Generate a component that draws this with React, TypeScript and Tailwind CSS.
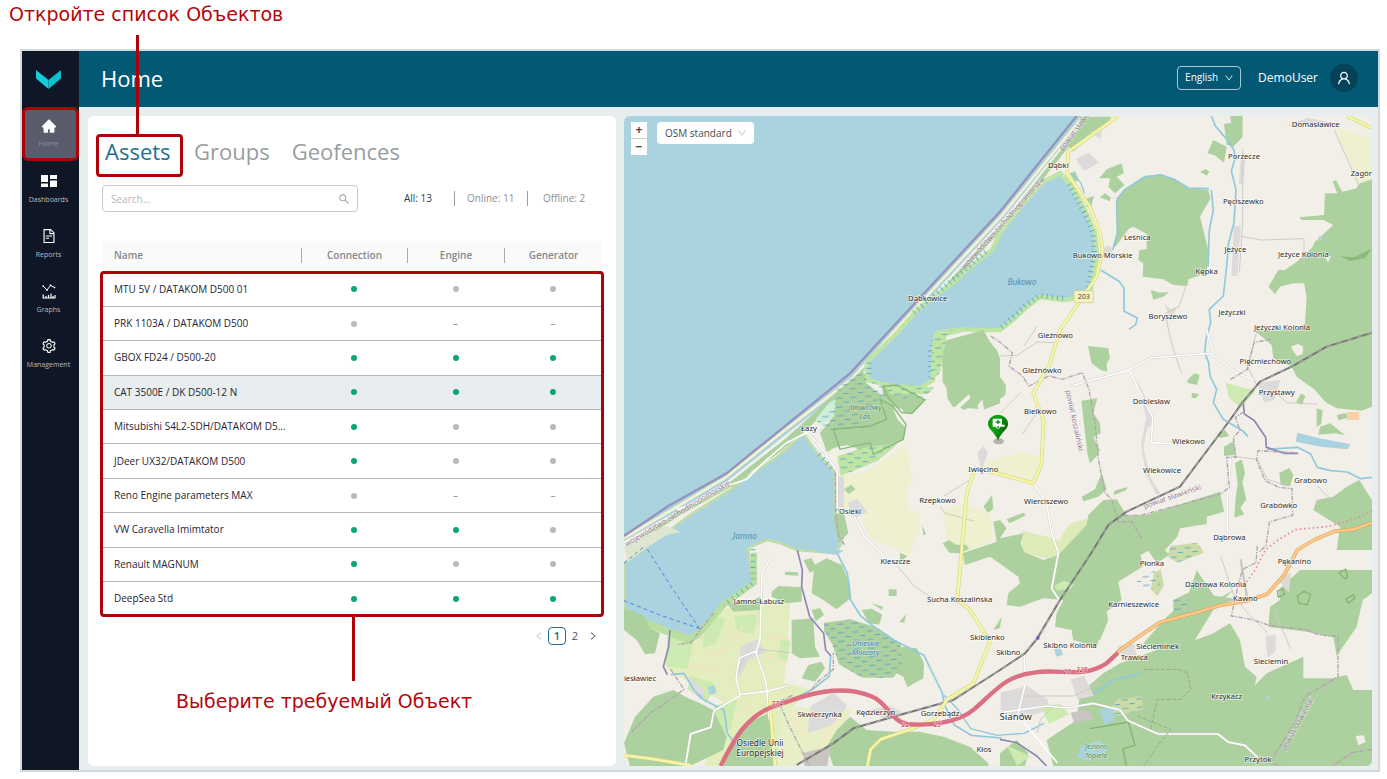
import React, { useState } from 'react';
import {
  AiFillHome,
  AiOutlineDown,
  AiOutlineFileText,
  AiOutlineLeft,
  AiOutlineRight,
  AiOutlineSearch,
  AiOutlineSetting,
  AiOutlineUser
} from 'react-icons/ai';

type Status = 'on' | 'off' | 'none';

interface Asset {
  name: string;
  connection: Status;
  engine: Status;
  generator: Status;
}

interface MapLabel {
  text: string;
  x: number;
  y: number;
  size?: number;
}

const assets: Asset[] = [
  { name: 'MTU 5V / DATAKOM D500 01', connection: 'on', engine: 'off', generator: 'off' },
  { name: 'PRK 1103A / DATAKOM D500', connection: 'off', engine: 'none', generator: 'none' },
  { name: 'GBOX FD24 / D500-20', connection: 'on', engine: 'on', generator: 'on' },
  { name: 'CAT 3500E / DK D500-12 N', connection: 'on', engine: 'on', generator: 'on' },
  { name: 'Mitsubishi S4L2-SDH/DATAKOM D5...', connection: 'on', engine: 'off', generator: 'off' },
  { name: 'JDeer UX32/DATAKOM D500', connection: 'on', engine: 'off', generator: 'off' },
  { name: 'Reno Engine parameters MAX', connection: 'off', engine: 'none', generator: 'none' },
  { name: 'VW Caravella Imimtator', connection: 'on', engine: 'on', generator: 'off' },
  { name: 'Renault MAGNUM', connection: 'on', engine: 'off', generator: 'off' },
  { name: 'DeepSea Std', connection: 'on', engine: 'on', generator: 'on' }
];

// Label positions are in map units, centred on the text
const places: MapLabel[] = [
  { text: 'Domasławice', x: 2075, y: 34 },
  { text: 'Porzecze', x: 1860, y: 130 },
  { text: 'Zagór', x: 2212, y: 180 },
  { text: 'Pęciszewko', x: 1858, y: 264 },
  { text: 'Dąbki', x: 1303, y: 155 },
  { text: 'Leśnica', x: 1540, y: 373 },
  { text: 'Jeżyce', x: 1834, y: 408 },
  { text: 'Jeżyce Kolonia', x: 2038, y: 422 },
  { text: 'Bukowo Morskie', x: 1436, y: 426 },
  { text: 'Kępka', x: 1748, y: 475 },
  { text: 'Dąbkowice', x: 911, y: 555 },
  { text: 'Boryszewo', x: 1632, y: 610 },
  { text: 'Jeżyczki', x: 1824, y: 597 },
  { text: 'Jeżyczki Kolonia', x: 1974, y: 641 },
  { text: 'Gleźnowo', x: 1294, y: 665 },
  { text: 'Gleźnówko', x: 1254, y: 771 },
  { text: 'Pięćmiechowo', x: 1924, y: 743 },
  { text: 'Przystawy', x: 1958, y: 838 },
  { text: 'Dobiesław', x: 1582, y: 864 },
  { text: 'Bielkowo', x: 1249, y: 893 },
  { text: 'Łazy', x: 555, y: 945 },
  { text: 'Wiekowo', x: 1694, y: 983 },
  { text: 'Iwięcino', x: 1078, y: 1068 },
  { text: 'Wiekowice', x: 1614, y: 1071 },
  { text: 'Grabowo', x: 2060, y: 1102 },
  { text: 'Rzepkowo', x: 941, y: 1161 },
  { text: 'Wierciszewo', x: 1266, y: 1163 },
  { text: 'Grabówko', x: 1964, y: 1176 },
  { text: 'Osieki', x: 678, y: 1194 },
  { text: 'Dąbrowa', x: 1816, y: 1273 },
  { text: 'Kleszcze', x: 814, y: 1345 },
  { text: 'Płonka', x: 1584, y: 1351 },
  { text: 'Pękanino', x: 2011, y: 1345 },
  { text: 'Dąbrowa Kolonia', x: 1775, y: 1412 },
  { text: 'Kawno', x: 1864, y: 1455 },
  { text: 'Sucha Koszalińska', x: 1007, y: 1458 },
  { text: 'Jamno-Łabusz', x: 405, y: 1464 },
  { text: 'Karnieszewice', x: 1529, y: 1474 },
  { text: 'Skibienko', x: 1090, y: 1573 },
  { text: 'Skibno', x: 1153, y: 1618 },
  { text: 'Skibno Kolonia', x: 1338, y: 1597 },
  { text: 'Siecieminek', x: 1601, y: 1600 },
  { text: 'Trawica', x: 1531, y: 1632 },
  { text: 'Sieciemin', x: 1941, y: 1644 },
  { text: 'iesławiec', x: 48, y: 1694 },
  { text: 'Krzykacz', x: 1808, y: 1748 },
  { text: 'Skwierzynka', x: 587, y: 1804 },
  { text: 'Kędzierzyn', x: 755, y: 1796 },
  { text: 'Gorzebądz', x: 948, y: 1799 },
  { text: 'Sianów', x: 1175, y: 1811, size: 29 },
  { text: 'Osiedle Unii', x: 408, y: 1889, size: 25 },
  { text: 'Europejskiej', x: 408, y: 1920, size: 25 },
  { text: 'Kłos', x: 1080, y: 1908 },
  { text: 'Przytok', x: 1902, y: 1939 }
];

const waters: MapLabel[] = [
  { text: 'Bukowo', x: 1194, y: 508 },
  { text: 'Jamno', x: 363, y: 1270 }
];

const captionClass = 'whitespace-nowrap font-["DejaVu_Sans",sans-serif] text-[19px] leading-6 text-[#b5060b]';

const DashboardIcon = () => (
  <svg viewBox="0 0 16 12" className="h-3 w-4" fill="currentColor" aria-hidden="true">
    <path d="M0 0h7v7H0zM9 0h7v4H9zM0 8.500h7V12H0zM9 5.500h7V12H9z" />
  </svg>
);

const GraphsIcon = () => (
  <svg viewBox="0 0 14 15" className="h-[15px] w-3.5" fill="none" stroke="currentColor" aria-hidden="true">
    <path d="M1 2l4 4 3.500-4.500L12.500 3.500" strokeWidth="1" />
    <path d="M.3 1.400h1.600v1.400H.3zM4.300 5.200h1.600v1.500H4.300zM7.700.6h1.600V2H7.700zM11.800 2.800h1.500v1.500h-1.500z" fill="currentColor" stroke="none" />
    <path d="M1.200 10.500V14M4 12v2M6.500 11v3M9 9.500V14M11 12v2M13 11v3M.5 14h13" strokeWidth="1.200" />
  </svg>
);

const Sidebar = () => {
  const items = [
    { label: 'Dashboards', icon: <DashboardIcon /> },
    { label: 'Reports', icon: <AiOutlineFileText className="size-4" /> },
    { label: 'Graphs', icon: <GraphsIcon /> },
    { label: 'Management', icon: <AiOutlineSetting className="size-4" /> }
  ];

  return (
    <aside className="flex w-[57px] shrink-0 flex-col bg-[#0f1625]">
      <a href="#" aria-label="Main page" className="flex h-14 items-center justify-center pr-1">
        <svg viewBox="0 0 25 19" className="h-[19px] w-[25px]" aria-hidden="true">
          <path d="M0 0l12.500 10V19L0 8.500z" fill="#16cbdc" />
          <path d="M25 0L12.500 10V19L25 8.500z" fill="#0cc0d2" />
        </svg>
      </a>
      <nav className="flex flex-col text-[7px] leading-3 text-[#b9bdc6]">
        <a href="#" className="flex h-[54px] flex-col items-center gap-1 rounded-md border-3 border-[#ad0308] bg-[#5b5c6b] pt-2 pr-1 text-[#8e909e]">
          <span className="flex h-4 items-center text-white"><AiFillHome className="size-4" /></span>
          Home
        </a>
        {items.map(item => (
          <a key={item.label} href="#" className="flex h-[55px] flex-col items-center gap-[5px] pt-3 pr-1">
            <span className="flex h-4 items-center text-white">{item.icon}</span>
            {item.label}
          </a>
        ))}
      </nav>
    </aside>
  );
};

const Header = () => (
  <header className="flex h-14 shrink-0 items-center justify-between bg-[#035874] pr-5 pb-0.5 pl-[22px] text-white">
    <h1 className="text-[22px] leading-8">Home</h1>
    <div className="flex items-center text-xs">
      <label className="relative mr-[17px] flex items-center">
        <span className="sr-only">Language</span>
        <select className="h-6 w-16 appearance-none rounded border border-[#a9c8d2] bg-transparent pl-[7px] text-[10px] font-medium text-white">
          <option>English</option>
        </select>
        <AiOutlineDown className="pointer-events-none absolute right-[7px] size-2.5" />
      </label>
      <span className="mr-3 font-medium">DemoUser</span>
      <button type="button" aria-label="Account" className="flex size-7 items-center justify-center rounded-full bg-[#05425a]">
        <AiOutlineUser className="size-4" />
      </button>
    </div>
  </header>
);

const StatusMark = ({ status }: { status: Status }) => {
  if (status === 'none') return <span className="text-[#8d9296]">–</span>;
  return (
    <span
      className={`mx-auto block size-1.5 rounded-full ${status === 'on' ? 'bg-[#0ba772]' : 'bg-[#b7b9ba]'}`}
    />
  );
};

const AssetsPanel = () => {
  const [query, setQuery] = useState('');
  const visible = assets.filter(a => a.name.toLowerCase().includes(query.toLowerCase()));

  return (
    <section className="flex flex-col rounded-md bg-white px-3.5 pt-[18px] pb-6">
      {/* Tabs */}
      <div className="-ml-1.5 flex items-start text-[22px] leading-7 text-[#979da1]">
        <div className="relative mr-[11px] h-[43px] w-[87px] rounded border-3 border-[#ad0308]">
          <button type="button" className="pl-1.5 text-[#24708c]">Assets</button>
          <span className="absolute bottom-full left-[37px] h-[102px] w-[3px] bg-[#ad0308]" />
        </div>
        <button type="button" className="mr-[22px] pt-[3px]">Groups</button>
        <button type="button" className="pt-[3px]">Geofences</button>
      </div>

      {/* Search and counters */}
      <div className="mt-2 flex items-center text-[10px] text-[#8b9094]">
        <label className="relative mr-[46px] flex flex-1 items-center">
          <span className="sr-only">Search</span>
          <input
            type="text"
            value={query}
            onChange={e => setQuery(e.target.value)}
            placeholder="Search..."
            className="h-[27px] w-full rounded border border-[#c6cacd] px-2 placeholder:text-[#b5b8ba]"
          />
          <AiOutlineSearch className="absolute right-2 size-3 text-[#8d9296]" />
        </label>
        <button type="button" className="w-[50px] text-left font-medium text-[#333b47]">All: 13</button>
        <button type="button" className="w-[73px] border-l border-[#9a9fa3] pl-3 text-left">Online: 11</button>
        <button type="button" className="w-[75px] border-l border-[#9a9fa3] pl-[15px] text-left">Offline: 2</button>
      </div>

      {/* Asset list */}
      <div className="relative mt-[29px]">
        <table className="h-[374px] w-full table-fixed border-collapse text-[10px]">
          <colgroup>
            <col />
            <col className="w-[106px]" />
            <col className="w-[97px]" />
            <col className="w-[98px]" />
          </colgroup>
          <thead className="bg-[#fafafa] text-[#85898d]">
            <tr className="h-8">
              <th className="pb-[3px] pl-3 text-left font-semibold">Name</th>
              {['Connection', 'Engine', 'Generator'].map(title => (
                <th key={title} className="p-0 pb-[3px] font-semibold">
                  <span className="block border-l border-[#a9adb0]">{title}</span>
                </th>
              ))}
            </tr>
          </thead>
          <tbody className="text-[#1f2433]">
            {visible.map((asset, idx) => (
              <tr
                key={asset.name}
                className={`border-b border-[#b5b8ba] last:border-b-0 ${idx === 3 ? 'bg-[#e8eef0]' : ''}`}
              >
                <td className="truncate pl-3 font-medium">{asset.name}</td>
                <td className="text-center"><StatusMark status={asset.connection} /></td>
                <td className="text-center"><StatusMark status={asset.engine} /></td>
                <td className="text-center"><StatusMark status={asset.generator} /></td>
              </tr>
            ))}
          </tbody>
        </table>
        <div className="pointer-events-none absolute -inset-x-0.5 top-[30px] -bottom-0.5 rounded border-3 border-[#ad0308]">
          <span className="absolute top-full left-1/2 h-[67px] w-[3px] bg-[#ad0308]" />
        </div>
      </div>

      {/* Pagination */}
      <nav aria-label="Pages" className="mt-3 mr-1 flex items-center justify-end text-[11px] text-[#4a5058]">
        <button type="button" aria-label="Previous page" className="mr-1"><AiOutlineLeft className="size-2.5 text-[#bfc2c4]" /></button>
        <button type="button" className="size-[18px] rounded border border-[#24708c] font-semibold leading-4 text-[#24708c]">1</button>
        <button type="button" className="size-[18px]">2</button>
        <button type="button" aria-label="Next page" className="ml-1"><AiOutlineRight className="size-2.5" /></button>
      </nav>

      <p className={`mt-11 pl-[74px] ${captionClass}`}>Выберите требуемый Объект</p>
    </section>
  );
};

const AssetMap = () => (
  <section className="relative min-h-[600px] overflow-hidden rounded-md bg-[#aad3df]">
    <svg
      viewBox="0 0 2244 1950"
      preserveAspectRatio="xMidYMid slice"
      className="absolute inset-0 size-full font-['Noto_Sans',sans-serif]"
      role="img"
      aria-label="Asset map"
    >
      <defs>
        <pattern id="marsh" width="44" height="26" patternUnits="userSpaceOnUse" patternTransform="rotate(-4)">
          <path d="M3 6h19M26 19h16" stroke="#4f9fc4" strokeWidth="2.500" />
        </pattern>
        <linearGradient id="pin" x1="0" x2="1" y1="0" y2=".4">
          <stop offset="0" stopColor="#0b8a0b" />
          <stop offset=".45" stopColor="#10a810" />
          <stop offset="1" stopColor="#056405" />
        </linearGradient>
      </defs>

      {/* Land and coast */}
      <path d="M1385 0L1140 305 812 660 692 795 480 960 310 1095 150 1190 0 1275V1950H2244V0z" fill="#f2efe9" />
      <path d="M1378 0L1134 298 805 652 685 787 473 950 303 1086 143 1182 0 1266" fill="none" stroke="#f8f1cd" strokeWidth="8" />
      <path d="M1392 10L1150 315 820 672 700 805 490 972 320 1106 170 1190 60 1262" fill="none" stroke="#add19e" strokeWidth="12" />
      <path d="M480 972L310 1105 330 1118 387 1062 459 1015 507 974 560 930 640 850 620 845z" fill="#add19e" />
      <path d="M1358 0L1128 287 798 642 678 772 388 1007 308 1072 133 1170 0 1260" fill="none" stroke="#9794bb" strokeWidth="7" />

      {/* Farmland and meadows */}
      <g fill="#eef0d0">
        <path d="M640 1080L720 1070 850 985 860 1060 845 1150 880 1220 860 1320 800 1290 740 1270 700 1180 640 1180z" />
        <g transform="translate(828 852)">
          <path d="M250 185L370 155 430 170 428 200 400 250 240 215zM195 310L270 340 280 420 190 460 140 420 130 330zM0 330L60 335 60 400 0 460zM0 150L40 240 0 290z" />
        </g>
        <path d="M2130 30L2244 70V190L2205 220 2170 130z" />
      </g>
      <path d="M290 1480L500 1440 490 1590 480 1700 560 1720 500 1780 470 1950H240L300 1760 180 1690 130 1660 145 1560 220 1560z" fill="#e4edbd" />
      <path d="M470 1770L680 1780 640 1880 520 1950H460z" fill="#e8efc6" />
      <g fill="#cdebb0">
        <path d="M130 1560L210 1575 190 1660 125 1650z" />
        <path d="M245 1500l60 5-30 80-40 10zM330 1500l70-5-10 60-50-10zM200 1680l70 20-20 60-60-40zM270 1770l70-20-20 90-50 20zM470 1570l30 5-10 60-30-5z" />
        <path d="M1805 800l90 25-45 50-35-30z" />
      </g>
      <path d="M1195 1245l90 20 20 10 30-50 60-20-10 50-70 70-60 0-60-20z" fill="#dcebb8" />
      <g stroke="#f7e3c3" strokeWidth="7" opacity=".7">
        <path d="M310 1590l50-60M240 1620l70-20M330 1560l60 30M440 1560l60 10M430 1620l60 20M200 1650l90 10M370 1760l20 40M560 1850l40-60M600 1870l40-60M510 1800l30 60" />
      </g>

      {/* Lakes */}
      <path
        d="M1308 171L1344 213 1383 282 1413 351 1419 411 1404 492 1398 543 1317 552 1248 543 1209 573 1167 612 1128 642 1077 642 1008 640 940 650 927 693 927 792 879 822 789 807 729 792 729 738 819 651 879 582 948 528 987 501 1029 462 1104 402 1128 351 1188 273 1257 198z"
        fill="#aad3df" stroke="#bfe5a5" strokeWidth="13"
      />
      <path
        d="M1335 205L1377 282 1407 351 1411 411 1396 492 1390 540M1317 547L1248 538 1205 568 1128 638M935 660L920 700V785M735 740L735 780M870 590L950 522 1095 400"
        fill="none" stroke="#58a3c6" strokeWidth="15" strokeDasharray="2.500 13"
      />
      <path
        d="M537 951L579 1011 633 1068 633 1182 654 1281 633 1311 519 1302 468 1281 429 1272 372 1296 387 1401 288 1473 228 1542 198 1563 138 1542 78 1518 0 1476V1341L57 1302 70 1290 138 1242 198 1197 318 1122 387 1071 459 1023 507 981z"
        fill="#aad3df" stroke="#bfdca8" strokeWidth="8"
      />
      <path d="M390 1310V1400L300 1465 225 1555 195 1575 138 1552 78 1528 0 1490" fill="none" stroke="#b9dfa0" strokeWidth="18" />
      <path d="M387 1300V1400L300 1468M640 1180L655 1280M585 1015L630 1065" fill="none" stroke="#58a3c6" strokeWidth="14" strokeDasharray="2.500 15" />
      <path d="M0 1290l55-30 75-30 40 18-40 8-60 38-60 45z" fill="#dfe6cf" />

      {/* Woods */}
      <g fill="#add19e">
        <g transform="translate(1128 -18)">
          <path d="M350 270L372 240 430 200 475 193 520 205 565 235 625 240 632 265 600 320 625 420 620 490 565 508 562 528 520 525 490 508 428 500 430 460 415 450 418 420 440 418 440 372 400 350 385 358 345 412 340 405 352 370z" />
          <path d="M298 205L320 178 365 160 372 190 350 200 374 225 345 250 325 230 330 205z" />
          <path d="M300 262l15-12 18 14-4 10zM262 265l20-8-10 40-14-8zM600 185l18-8 10 8-8 12zM622 130l18-40 40 20-8 48-28-22z" />
          <path d="M672 42l22-4-4-20h38v62l-28 30-20-6z" />
          <path d="M240 20h95l-30 40-45 25-40 40-20-20 35-40zM452 540l28 8 28-2-20 15-28 8z" />
          <path d="M1116 208L1075 222 1070 235 1010 250 975 250 972 315 898 322 905 330 970 330 1000 345 945 395 935 415 890 455 855 480 835 480 805 530 825 553 840 530 880 520 912 520 920 560 915 640 890 660H1116z" />
          <path d="M998 215l10-5 20 38-15 4zM210 190l15-6 12 26-12 5z" />
        </g>
        <g transform="translate(1128 642)">
          <path d="M762 0L815 45 820 85 875 110 890 140 945 180 975 215 1010 235 1085 242 1116 230V0z" />
          <path d="M264 48L325 55 330 85 320 100 322 125 302 120 275 100zM0 140l18 25-2 30-16 12zM562 150l22-20 15 5-8 30-28-6zM575 188l22 4-8 12h-14z" />
          <path d="M244 212L292 205 280 250 300 280 302 310 280 320 300 360 288 380 270 400 262 370z" />
          <path d="M245 500l40-22 20-50 15 50-25 22-45 14zM342 483l40-12-4 10-36 14zM672 350l28-16 8 40-36 4zM655 312l20-12 12 18-28 6z" />
          <path d="M705 400l20-12 10 40-8 30 12 50-18 25 12 20-30 10 4-60 6-40z" />
          <path d="M838 428l30-14 12 20-10 35-28-4zM888 216l16-26 12 8-10 26z" />
          <path d="M1078 450L1116 510V660H1010L1020 590 940 540 950 510 1000 500 1040 470z" />
          <path d="M950 235l18 6-4 40-14 10zM1010 255l28-6 6 14-28 8zM960 290l30-10 45 35-30-5-50 4z" />
        </g>
        <g transform="translate(828 852)">
          <path d="M188 460L290 425 280 365 300 360 320 385 300 415 370 400 362 430 372 455 430 480 475 465 560 375 565 345 610 300 650 298 680 347 740 345 960 275 972 335 920 350 920 372 840 385 832 410 795 450 808 465 770 490 745 452 722 465 728 500 655 545 665 600 620 635 625 660 600 720 520 720 515 690 465 680 470 640 490 600 430 595 360 620 320 615 325 580 360 550 355 530 270 470 195 495z" />
          <path d="M128 430l20-10 20 14 30 0 10 12-30 14-30-2zM250 320l26-34 4 40-16 12zM320 358l50-20 8 8-50 24zM66 376l12 26-8 4zM0 458l22 10-22 20zM280 690l25-40-5 34z" />
          <path d="M155 0h70l25 24-30-6-30 12z" />
        </g>
        <g transform="translate(-12 642)">
          <path d="M965 35L1090 0 1110 35 1130 60 1140 85V220L1095 238 1000 232 982 205 980 175 968 155z" />
          <path d="M728 120L640 195 640 260 600 310 620 365 680 345 755 375 850 330 858 285 820 230 790 200 740 160z" />
          <path d="M815 225L790 200 785 170 820 165 915 210 880 250 850 250zM672 478l22-14 12 14-20 14zM640 560l30-20 15 70-30 30z" />
        </g>
        <g transform="translate(-12 1302)">
          <path d="M583 45L620 25 665 45 690 100 692 145 650 178 610 150 575 130z" />
          <path d="M455 125L475 108 545 112 545 155 500 160 455 140zM515 210L580 205 585 290 600 320 540 325 515 310zM550 30l25-5 15 30-20 14zM495 65l40 2v10l-40-2zM575 180l25-6 12 20-25 20zM806 118h24v20h-24zM755 160l35 10-5 10zM838 215l20-22-5 25zM725 180l30-4 32 18-10 30-30-4z" />
          <path d="M12 175L70 195 90 235 120 250 105 310 75 312 50 270 12 240z" />
          <path d="M845 290L890 295 912 340 910 385 862 412 850 380 830 370z" />
          <path d="M160 420L205 445 240 460 280 480 320 560 310 600 210 648H30L12 580 45 500 100 440z" />
          <path d="M445 490L460 580 465 648H310L360 550 400 510z" />
          <path d="M690 500L740 540 820 545 900 545 970 560 1050 590 1105 640V648H640L620 590 650 540z" />
          <path d="M545 385l20-40 40-10 10 20-30 40zM320 160l80-10 20-10v40l-80 5z" />
        </g>
        <g transform="translate(1128 1302)">
          <path d="M590 60L650 150 700 120 640 180 585 270 640 250 690 220 720 270 735 350 770 380 765 405 800 370 910 320 910 385 1000 385 1040 375 1060 420 1116 420V648H160L140 570 230 510 240 430 310 370 360 340 470 300 430 280 500 200 560 150z" />
          <path d="M215 245l85-10 0 20-10 35-70-20zM520 150l50-25 60 10 80 12-100 32-90 18zM970 60H1116V130L1088 150 1070 230 1010 318 1000 262 920 245 805 230 810 170 840 150 835 120 900 60z" />
          <path d="M0 610l50-40 35 40-10 38H0z" />
        </g>
      </g>

      {/* Clearings and settlements */}
      <g fill="#f2efe9">
        <path d="M2000 692l22-8 16 8-2 22-18 6zM2100 415l20 5-8 20z" />
        <path d="M1718 1570l45-72 60-40 8 22-60 70z" />
        <path d="M985 880l50-45 5 10-40 38zM1060 870l15-20 10 60zM805 870l30 10 25 70-40-40z" />
        <path d="M620 1000l30-10 50 5-30 20-40 5z" />
        <path d="M2195 1860l25-2 5 20-22 10zM1890 1640l10 50 5-60z" />
      </g>
      <path d="M1290 1410l30-16 30 10-10 14-40 6z" fill="#cdebb0" />
      <g fill="#dddbd9">
        <path d="M1355 130l40-20 30 30-45 25zM1400 50l35-20-5 40zM1430 395l30-6 10 30-30 5zM1850 125h15l-8 80h-12zM1830 330h20l-10 150h-18zM1540 795l30 60 20 70-20 10-12 60 22 90 30 50h-14l-30-60-15-90 16-80-15-60z" />
        <path d="M1990 30l60-25 100 20-50 6zM1060 1010l20-20 12 20-20 55zM640 1080l20 4v90h-25zM670 1160l30-12 30 40-40 20z" />
        <path d="M350 1590l50-20 25 40-50 20-30 60zM190 1680l50 40-5 30-30-20zM560 1770l70-40 40 40-50 60-70 20zM740 1780l60-10 40 20-60 20z" />
        <path d="M1130 1730l80-20 60 40 10 30-90 30-60-30zM1340 1690l40-10 30 60-50 10zM1480 1590l50-6 10 40-40 10zM1925 1560l30-4v50l-25 20zM1960 1390l40-20-5 60zM1900 800l70-8-20 60-30 8zM1620 560l20 20 20-8-20 40z" />
      </g>
      <path d="M1340 1790l50-10 20 30-60 10zM540 1910l80-20-10 60h-70z" fill="#c9c5c2" />
      <path d="M1250 1770l60-6 25 30-60 30zM1150 1890l70 30-40 30z" fill="#cdebb0" />
      <path d="M575 910l40-50 20-10-5 50-40 30z" fill="#cfeed9" />
      <path d="M2170 888h36v24h-36z" fill="#fbd0a8" />

      {/* Marshes */}
      <path d="M716 762l14 30 60 20 136 30-10 10-150-10-40 60 8 35-90 5-50 10-15-35 55-60 8-60z" fill="url(#marsh)" />
      <path d="M640 1020l100-30 80-5-60 50-110 45zM780 815l60-10 90 10-20 20-110 0zM928 650l60-8 60-2-80 20-20 110-30 30z" fill="#bfe5a5" />
      <path d="M640 1020l100-30 80-5-60 50-110 45zM780 815l60-10 90 10-20 20-110 0zM928 650l60-8 60-2-80 20-20 110-30 30z" fill="url(#marsh)" />
      <path d="M600 1520l80-10 80 25 70 50 5 70-30 30-90 0-70-40-20-60-25-40z" fill="#add19e" />
      <path d="M600 1520l80-10 80 25 70 50 5 70-30 30-90 0-70-40-20-60-25-40z" fill="url(#marsh)" />
      <path d="M1480 1750l70-10 10 40-80 20-20-20zM1590 1370l20-10 10 50-20 30-20-20zM1640 1290l80-10 20 30-80 30-30-20z" fill="#cbdca8" />
      <path d="M1480 1750l70-10 10 40-80 20-20-20zM1540 1390l60-30 10 50-30 10-40 0zM1640 1290l80-10 20 30-80 30-30-20zM1645 1450l50-5v40l-50 10z" fill="url(#marsh)" />

      {/* Small ponds */}
      <g fill="#aad3df">
        <path d="M2020 950l60 15 100 20-10 15-80-8-75-15zM1425 1780l40-6 6 40-30 10zM1370 1890l60-15 20 30-50 30-40-10zM1290 1600l20-4 8 20-20 6z" />
        <path d="M250 1712l22-4 6 22-20 8zM215 1730l20 8-4 14zM570 1302h90l-20 14-50-6zM2085 360h10v14h-10zM1930 1735l8 8-8 8-8-8z" />
      </g>

      {/* Forest reserve outlines */}
      <path d="M768 850l20 60-50 20-110 10 20 60 90-20 10 35 90-45 8-45-40-55zM790 840l-12-30 40-3 85 45-40 40-30-2z" fill="none" stroke="#86b878" strokeWidth="4" />
      <path d="M1398 1838l115-20 20 70-36 10 10 52M1960 1425l16-6 5 16-18 8zM2020 1440l20-14 20 10-10 30-25-4zM2145 1370l20-10 6 24-8 4zM2165 1450l24-14 4 10-20 16z" fill="none" stroke="#7fb56e" strokeWidth="4" />
      <path d="M2148 420l40 4 56-26-20 28-46 10z" fill="#8dbb7d" />

      {/* Rivers */}
      <g fill="none" stroke="#8fc9dc" strokeWidth="5" strokeLinejoin="round">
        <path d="M1762 0l12 30 30 35 25 35 5 25-12 40 14 55-6 100-16 60-8 90-8 70-42 40 4 40-14 50-4 40 12 30 4 40 20 40-10 40 30 50 60 36 14 16" />
        <path d="M1762 222l6 60-12 60-4 110M1478 250l25-30 60-38 50-5 40 14 40 25 62 2M1478 252l2 100-14 50M1430 462l55 34 15 20v70l40 20-5 20-20 14" />
        <path d="M1340 170l30 30 12 32" strokeWidth="4" />
        <path d="M1930 1000l90-6 40 20 20 40 40 10 50 4 40 20 34-4" />
        <path d="M640 1312l30 60 10 80 30 48 40 32 60 40 50 26 40 20 24 50 30 60 8 40 30 60 50 30 90 8" />
        <path d="M140 1676l40-4 30 50 30 30 60 30 10 70 30 40M620 1620l-4 60-50 40-40 20M1410 1732l60-40 80-20" />
        <path d="M960 1738l40 40 40 60 80 20 80-6 60-30" strokeWidth="4" />
      </g>
      <g fill="none" stroke="#8d87b3" strokeWidth="5">
        <path d="M520 1302l15 60-2 50 24 90 42 50 6 50 16 18M138 1542l-4 50-16 60 12 24M1858 862l3 32 30 20 34 50 2 30 55 18 40 0" />
        <path d="M1128 1870l50 10 60 40 30 30" />
      </g>

      {/* Local roads */}
      <g fill="none" stroke="#cfcac6" strokeWidth="3">
        <path d="M2130 40l40 90 35 80M1856 100v220l-10 150M1850 360l60 12 130-4v90M1685 512l-20 60-40 20 10 60 20 70 18 50M1130 720l50-2 60-40 60 2M1200 690l40-60M1130 890l60-60M1195 955l40-60" />
        <path d="M960 1140l80-50 10-20M950 1170l10 20 90 26M820 1350l50 60 60 40 90 10M1190 1740l160 0 80-40M1790 1320l40 120 40 50 60 60M1950 1480l50 120M1900 640l-30 110 30 60M1820 1020l80 10 30 60 60 20M2080 1110l40 40M1940 820l50 40 90 5" />
        <path d="M1290 1770l-40 40-10 40M400 1600l100 10M360 1620l-20 60" />
      </g>
      <g fill="none" stroke="#cbc7c3" strokeWidth="7">
        <path d="M1340 810l170-46 70-38 180-14M1516 764l40 80 30 60-4 76 80 4M1768 712l-20-70M1760 712l80 60 50 20" />
        <path d="M548 948l40 40 52 80v110M690 1200l30 60 60 60" />
        <path d="M448 1310l-34 60-6 200-12 40 30 90 10 110M396 1606l-50 20-10 60 12 50 80-10 60-16M350 1738l-80 46-10 50-60 20-16 96" />
        <path d="M1228 1102L1268 1162 1283 1252 1303 1312 1283 1417 1306 1452 1258 1542 1200 1612 1205 1700 1180 1800" />
        <path d="M1128 1790l140-20 60 6 80-14 80 20 24 32 90 40h180l30 24 50 10 50 46" />
        <path d="M1820 1020l-10 130 0 100M1850 1330l20 120" />
      </g>
      <g fill="none" stroke="#fff" strokeWidth="5">
        <path d="M1340 810l170-46 70-38 180-14M1516 764l40 80 30 60-4 76 80 4M1768 712l-20-70M1760 712l80 60 50 20" />
        <path d="M548 948l40 40 52 80v110M690 1200l30 60 60 60" />
        <path d="M448 1310l-34 60-6 200-12 40 30 90 10 110M396 1606l-50 20-10 60 12 50 80-10 60-16M350 1738l-80 46-10 50-60 20-16 96" />
        <path d="M1228 1102L1268 1162 1283 1252 1303 1312 1283 1417 1306 1452 1258 1542 1200 1612 1205 1700 1180 1800" />
        <path d="M1128 1790l140-20 60 6 80-14 80 20 24 32 90 40h180l30 24 50 10 50 46" />
        <path d="M1820 1020l-10 130 0 100M1200 1820l50 60 50 60" />
        <path d="M548 950l-60 30-70 60-50 50-90 30-60 40-60 20" />
      </g>

      {/* Administrative borders */}
      <g fill="none" stroke="#b3a2b0" strokeWidth="4" strokeDasharray="14 4 4 4">
        <path d="M1100 660l30 20 35 30-10 40 40 30 20 30 60-30 40 10 60-20 20 50 18 100 10 110 20 100 20 20 20 68 40-2 30 50" />
        <path d="M1500 1198l50 0 240-64 26-20-8-90 28 0-8-60 20-20-14-40 30-20M1820 790l50-30 20-80 50-10M2012 1010l-110-6-4 30 26 60 40 20 40 4 2 80-70 20-10 70-20 20" />
        <path d="M1900 1290l-4 50-40 20-14 50-20 90 60 10 60 20 100 10 40 16 60 6 0 120-100 60-30 80-70 110M2244 1900l-60 10-60 40M1900 1925l70 26" />
        <path d="M634 1070v110l10 80 20 30M270 1490l-40 50-30 40-40 6M548 1740l30-40 50-40 0-50M505 1738l-40 20 30 70 60 120M140 1660l40 60-40 30-60 40-60 60" />
      </g>
      <path d="M1560 1660h100l30 10 10 50-30 30h-70l-20 90M1540 1800l100 40-40 50-40 60" fill="none" stroke="#93ad86" strokeWidth="3" strokeDasharray="12 5" />

      {/* Railway */}
      <g fill="none" strokeLinejoin="round">
        <path d="M2244 650L2108 692 2003 752 1908 797 1853 862 1818 912 1668 1112 1508 1187 1453 1227 1398 1317 1308 1452 1240 1567 1203 1612 1128 1662 988 1752 808 1802 688 1837 628 1882 518 1947" stroke="#777" strokeWidth="6" />
        <path d="M2244 650L2108 692 2003 752 1908 797 1853 862 1818 912 1668 1112 1508 1187 1453 1227 1398 1317 1308 1452 1240 1567 1203 1612 1128 1662 988 1752 808 1802 688 1837 628 1882 518 1947" stroke="#b5b5b5" strokeWidth="3" strokeDasharray="14 18" />
      </g>
      <path d="M1237 1566h9" stroke="#6a55c0" strokeWidth="9" />

      {/* Main roads */}
      <g fill="none" strokeLinejoin="round">
        <g stroke="#cdd28a" strokeWidth="11">
          <path d="M1483 0L1333 107 1328 172 1398 272 1428 352 1436 402 1418 482 1308 642 1278 742 1228 832 1258 912 1253 1042 1228 1102 1098 1067M1050 1067L1028 1132 1000 1452 1038 1482 1098 1577 1048 1702 970 1750 930 1810 860 1840 770 1870 740 1900 730 1950M437 1750l6 80 10 120M0 1918l80 10 120 20M2168 0l76 36" />
        </g>
        <g stroke="#f6f5a6" strokeWidth="8">
          <path d="M1483 0L1333 107 1328 172 1398 272 1428 352 1436 402 1418 482 1308 642 1278 742 1228 832 1258 912 1253 1042 1228 1102 1098 1067M1050 1067L1028 1132 1000 1452 1038 1482 1098 1577 1048 1702 970 1750 930 1810 860 1840 770 1870 740 1900 730 1950M437 1750l6 80 10 120M0 1918l80 10 120 20M2168 0l76 36" />
        </g>
        <path d="M1480 1608l70-50 60-40 100-26 80-24 80-14 60-20 50-56 40-76 50-30 60-26 60-6 54-20" stroke="#d99d5a" strokeWidth="11" />
        <path d="M1480 1608l70-50 60-40 100-26 80-24 80-14 60-20 50-56 40-76 50-30 60-26 60-6 54-20" stroke="#fbc887" strokeWidth="8" />
        <path d="M290 1950c40-80 80-160 180-186c80-30 180-60 270-24c50 18 60 76 110 84c60 6 150-2 200-44c60-50 90-100 180-110c70-14 150 20 220-30l32-30" stroke="#db7082" strokeWidth="13" />
      </g>
      <path d="M2244 1185l-40 20-90 26-100 10-50 30-40 30-30 60-36 50" fill="none" stroke="#e88aa0" strokeWidth="5" strokeDasharray="5 8" />

      {/* Ferry lines */}
      <path d="M70 1300l70 110 88 130M0 1454l110 44 118 40M0 1342l60-50" fill="none" stroke="#5b7fe0" strokeWidth="3" strokeDasharray="12 9" />

      {/* Road numbers */}
      <rect x="1350" y="524" width="58" height="36" rx="3" fill="#f5f2c0" stroke="#c9c790" strokeWidth="2" />
      <g fontSize="21" textAnchor="middle">
        <text x="1379" y="550" fill="#3d4f3c">203</text>
        <g fill="#c22035" stroke="#fff" strokeOpacity=".7" strokeWidth="3" paintOrder="stroke" fontStyle="italic">
          <text x="459" y="1771">774</text>
          <text x="844" y="1832">25</text>
          <text x="940" y="1833">25</text>
          <text x="1329" y="1674">26</text>
          <text x="1373" y="1669">326</text>
        </g>
      </g>

      {/* Place names */}
      <g textAnchor="middle" fill="#2b2b2b" stroke="#fff" strokeOpacity=".7" strokeWidth="4" paintOrder="stroke">
        {places.map(p => (
          <text key={p.text} x={p.x} y={p.y} fontSize={p.size ?? 23}>{p.text}</text>
        ))}
      </g>
      <g textAnchor="middle" fill="#4f8fb8" fontStyle="italic" fontSize="25">
        {waters.map(w => (
          <text key={w.text} x={w.x} y={w.y}>{w.text}</text>
        ))}
        <g fontSize="22" stroke="#d8ead5" strokeWidth="3" paintOrder="stroke">
          <text x="725" y="1590" fill="#3578b0">Unieskie</text>
          <text x="725" y="1616" fill="#3578b0">Moczary</text>
          <text x="1416" y="1900" fill="#3f8a68">Jezioro</text>
          <text x="1416" y="1926" fill="#3f8a68">Topiele</text>
          <text x="723" y="882" fill="#4f7a58">Jałowcowy</text>
          <text x="723" y="908" fill="#4f7a58">Las</text>
        </g>
      </g>
      <g fill="#8e7894" fontSize="22" stroke="#fff" strokeOpacity=".6" strokeWidth="3" paintOrder="stroke">
        <text transform="translate(8 1292) rotate(-31)">województwo zachodniopomorskie</text>
        <text transform="translate(1022 460) rotate(-48)">województwo zachodniopomorskie</text>
        <text transform="translate(1316 106) rotate(-53)">powiat sławieński</text>
        <text transform="translate(1325 824) rotate(78)">powiat koszaliński</text>
        <text transform="translate(1562 1178) rotate(-19)">powiat sławieński</text>
        <text transform="translate(1984 1906) rotate(-61)">powiat sławieński</text>
      </g>

      {/* Asset pin */}
      <g transform="translate(1122 936)">
        <ellipse cx="2" cy="40" rx="16" ry="9" fill="#777" opacity=".5" />
        <path d="M0 38C-8 14-30 4-30-12a30 28 0 0 1 60 0C30 4 8 14 0 38z" fill="url(#pin)" />
        <path d="M-16-28h28v18h8v6H6a6 6 0 0 1-12 0h-10z" fill="#fff" />
        <path d="M0-25v13M-7-18h14" stroke="#0d960d" strokeWidth="4" />
        <circle cx="0" cy="-3" r="3" fill="#0d960d" />
      </g>
    </svg>

    {/* Map controls */}
    <div className="absolute top-1.5 left-[7px] flex items-start gap-2.5 text-[10px] text-[#454b52]">
      <div className="flex w-4 flex-col divide-y divide-[#ccc] bg-white text-xs leading-4 font-bold">
        <button type="button" aria-label="Zoom in">+</button>
        <button type="button" aria-label="Zoom out">−</button>
      </div>
      <label className="relative flex items-center">
        <span className="sr-only">Map layer</span>
        <select className="h-[22px] w-[97px] appearance-none rounded-sm bg-white pl-2 font-medium">
          <option>OSM standard</option>
        </select>
        <AiOutlineDown className="pointer-events-none absolute right-[7px] size-2.5 text-[#b5b8ba]" />
      </label>
    </div>
  </section>
);

export default function App() {
  return (
    <div className="flex min-h-screen flex-col bg-white pr-[7px] pb-[7px] pl-5 font-['Open_Sans',sans-serif]">
      <p className={`-ml-[11px] h-[49px] pt-0.5 ${captionClass}`}>Откройте список Объектов</p>
      <div className="flex flex-1 border-2 border-[#d3d9dc]">
        <Sidebar />
        <div className="flex min-w-0 flex-1 flex-col">
          <Header />
          <main className="grid flex-1 grid-cols-[12fr_17fr] gap-2 bg-[#e8edf0] pt-[9px] pr-1.5 pb-1 pl-[9px]">
            <AssetsPanel />
            <AssetMap />
          </main>
        </div>
      </div>
    </div>
  );
}
